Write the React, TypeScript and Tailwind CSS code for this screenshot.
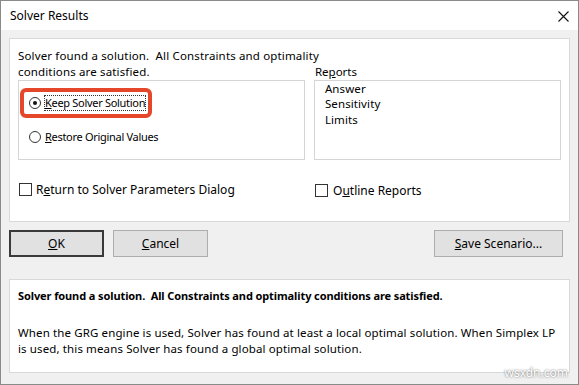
import React from 'react';

const font = { fontFamily: '"Noto Sans", "Open Sans", sans-serif' };

function Radio({ checked }: { checked?: boolean }) {
  return (
    <span className="flex h-[12px] w-[12px] shrink-0 items-center justify-center rounded-full border border-[#333] bg-white">
      {checked && <span className="h-[4px] w-[4px] rounded-full bg-[#111]" />}
    </span>
  );
}

function Checkbox() {
  return <span className="h-[13px] w-[13px] shrink-0 border border-[#333] bg-white" />;
}

function Button({
  children,
  width,
  primary,
}: {
  children: React.ReactNode;
  width: string;
  primary?: boolean;
}) {
  return (
    <button
      className={`${width} flex h-[27px] items-center justify-center bg-[#e1e1e1] text-[12px] text-black ${
        primary ? 'border-2 border-[#3a3a3a]' : 'border border-[#adadad]'
      }`}
    >
      {children}
    </button>
  );
}

export default function App() {
  return (
    <div
      className="flex h-[385px] w-[579px] flex-col border border-[#8a8a8a] bg-[#f0f0f0] text-[12px] text-black"
      style={font}
    >
      {/* title bar */}
      <div className="flex h-[29px] shrink-0 items-center justify-between bg-white pl-[9px] pr-[9px]">
        <span className="text-[12px]">Solver Results</span>
        <svg width="11" height="11" viewBox="0 0 11 11" className="mt-[1px]">
          <path d="M0.5 0.5 L10.5 10.5 M10.5 0.5 L0.5 10.5" stroke="#111" strokeWidth="1.1" />
        </svg>
      </div>

      <div className="relative flex flex-1 flex-col px-[8px]">
        {/* top panel */}
        <div className="mt-[8px] flex h-[184px] flex-col border border-[#d9d9d9] bg-white px-[8px] pt-[9px]">
          <div className="whitespace-nowrap text-[11.5px] leading-[15.7px] tracking-[0.15px]">
            Solver found a solution.&nbsp; All Constraints and optimality
          </div>
          <div className="flex gap-[9px]">
            <div className="flex w-[288px] flex-col">
              <div className="h-[16px] text-[11.5px] leading-[15.7px] tracking-[0.15px]">conditions are satisfied.</div>
              <div className="flex h-[80px] flex-col border border-[#d5d5d5]">
                <div className="ml-[1px] mt-[7px] flex h-[30px] w-[132px] items-center rounded-[6px] border-[4px] border-[#e5472b] pl-[5px]">
                  <Radio checked />
                  <span className="ml-[3px] whitespace-nowrap border border-dotted border-[#333] text-[11px] leading-[14px] tracking-[-0.3px]">
                    <u>K</u>eep Solver Solution
                  </span>
                </div>
                <div className="ml-[10px] mt-[11px] flex h-[16px] items-center">
                  <Radio />
                  <span className="ml-[4px] whitespace-nowrap text-[11px] leading-[14px] tracking-[-0.3px]">
                    <u>R</u>estore Original Values
                  </span>
                </div>
              </div>
            </div>
            <div className="flex w-[248px] flex-col">
              <div className="h-[16px] pl-[1px] text-[11.5px] leading-[15.7px]">
                Re<u>p</u>orts
              </div>
              <div className="flex h-[80px] flex-col border border-[#d5d5d5] pl-[10px] text-[11.5px] leading-[15.7px] tracking-[0.1px]">
                <span>Answer</span>
                <span>Sensitivity</span>
                <span>Limits</span>
              </div>
            </div>
          </div>
          <div className="mt-[20px] flex">
            <div className="flex w-[297px] items-center gap-[4px] pl-[1px]">
              <Checkbox />
              <span className="whitespace-nowrap">
                R<u>e</u>turn to Solver Parameters Dialog
              </span>
            </div>
            <div className="mt-[2px] flex items-center gap-[5px]">
              <Checkbox />
              <span className="whitespace-nowrap">
                O<u>u</u>tline Reports
              </span>
            </div>
          </div>
        </div>

        {/* buttons */}
        <div className="mt-[8px] flex gap-[9px]">
          <Button width="w-[95px]" primary>
            <u>O</u>K
          </Button>
          <Button width="w-[95px]">
            <u>C</u>ancel
          </Button>
          <div className="flex-1" />
          <div className="mr-[7px]">
            <Button width="w-[129px]">
              <u>S</u>ave Scenario...
            </Button>
          </div>
        </div>

        {/* message panel */}
        <div className="mt-[22px] flex h-[94px] flex-col border border-[#d9d9d9] bg-white px-[8px] pt-[8px]">
          <div className="whitespace-nowrap text-[11px] font-bold leading-[15px] tracking-[-0.1px]">
            Solver found a solution.&nbsp; All Constraints and optimality conditions are satisfied.
          </div>
          <div className="mt-[22px] whitespace-nowrap text-[11.5px] leading-[15.7px] tracking-[0.12px]">
            When the GRG engine is used, Solver has found at least a local optimal solution. When Simplex LP
            <br />
            is used, this means Solver has found a global optimal solution.
          </div>
        </div>

        <span className="absolute bottom-[2px] right-[10px] text-[12px] text-white [text-shadow:0_0_2px_#555]">
          wsxdn.com
        </span>
      </div>
    </div>
  );
}
